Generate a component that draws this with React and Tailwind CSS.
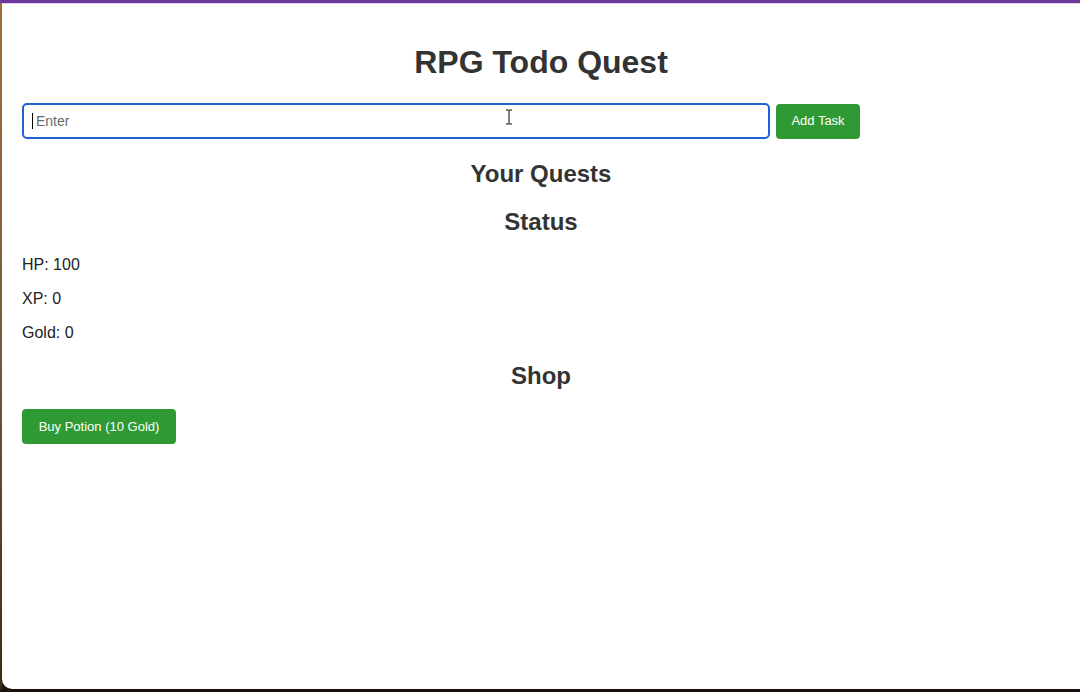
import React from "react";

export default function App() {
  return (
    <div className="w-[1080px] h-[692px] bg-[#1e100c] flex flex-col overflow-hidden" style={{ fontFamily: '"Liberation Sans", Arial, sans-serif' }}>
      <div className="h-[3px] bg-[#6c399a] shrink-0" />
      <div className="flex flex-1 min-h-0 pb-[3px]">
        <div className="w-[2px] bg-gradient-to-b from-[#a06e3c] via-[#7a5a3a] to-[#3a2a1a] shrink-0" />
        <div className="flex-1 bg-white rounded-bl-[10px] border-t border-[#e8cdee] relative">
          <div className="px-[20px] flex flex-col">
            <h1 className="mt-[40px] text-center text-[32px] leading-[37px] font-bold text-[#333333]">RPG Todo Quest</h1>
            <div className="mt-[22px] flex items-center gap-[6px]">
              <div className="relative w-[748px] h-[36px]">
                <input
                  className="w-full h-full border-2 border-[#1e63cf] rounded-[5px] pl-[12px] text-[14px] text-[#333] placeholder:text-[#6b6b6b] outline-none"
                  placeholder="Enter"
                  style={{ fontFamily: '"Liberation Sans", Arial, sans-serif' }}
                />
                <div className="absolute left-[10px] top-[10px] w-[1px] h-[16px] bg-black" />
              </div>
              <button className="w-[84px] h-[35px] bg-[#2f9a34] text-white text-[13px] rounded-[4px]">Add Task</button>
            </div>
            <h2 className="mt-[21px] text-center text-[24px] leading-[28px] font-bold text-[#333333]">Your Quests</h2>
            <h2 className="mt-[20px] text-center text-[24px] leading-[28px] font-bold text-[#333333]">Status</h2>
            <p className="mt-[20px] text-[16px] leading-[18px] text-[#222]">HP: 100</p>
            <p className="mt-[16px] text-[16px] leading-[18px] text-[#222]">XP: 0</p>
            <p className="mt-[16px] text-[16px] leading-[18px] text-[#222]">Gold: 0</p>
            <h2 className="mt-[20px] text-center text-[24px] leading-[28px] font-bold text-[#333333]">Shop</h2>
            <div className="mt-[19px]">
              <button className="w-[154px] h-[35px] bg-[#2f9a34] text-white text-[13px] rounded-[4px]">Buy Potion (10 Gold)</button>
            </div>
          </div>
          <svg className="absolute left-[502px] top-[105px]" width="10" height="16" viewBox="0 0 10 16">
            <path d="M2 1h2.5L5 1.5 5.5 1H8M5 1.5v13M2 15h2.5l.5-.5.5.5H8" fill="none" stroke="#000" strokeWidth="1" />
          </svg>
        </div>
      </div>
    </div>
  );
}
